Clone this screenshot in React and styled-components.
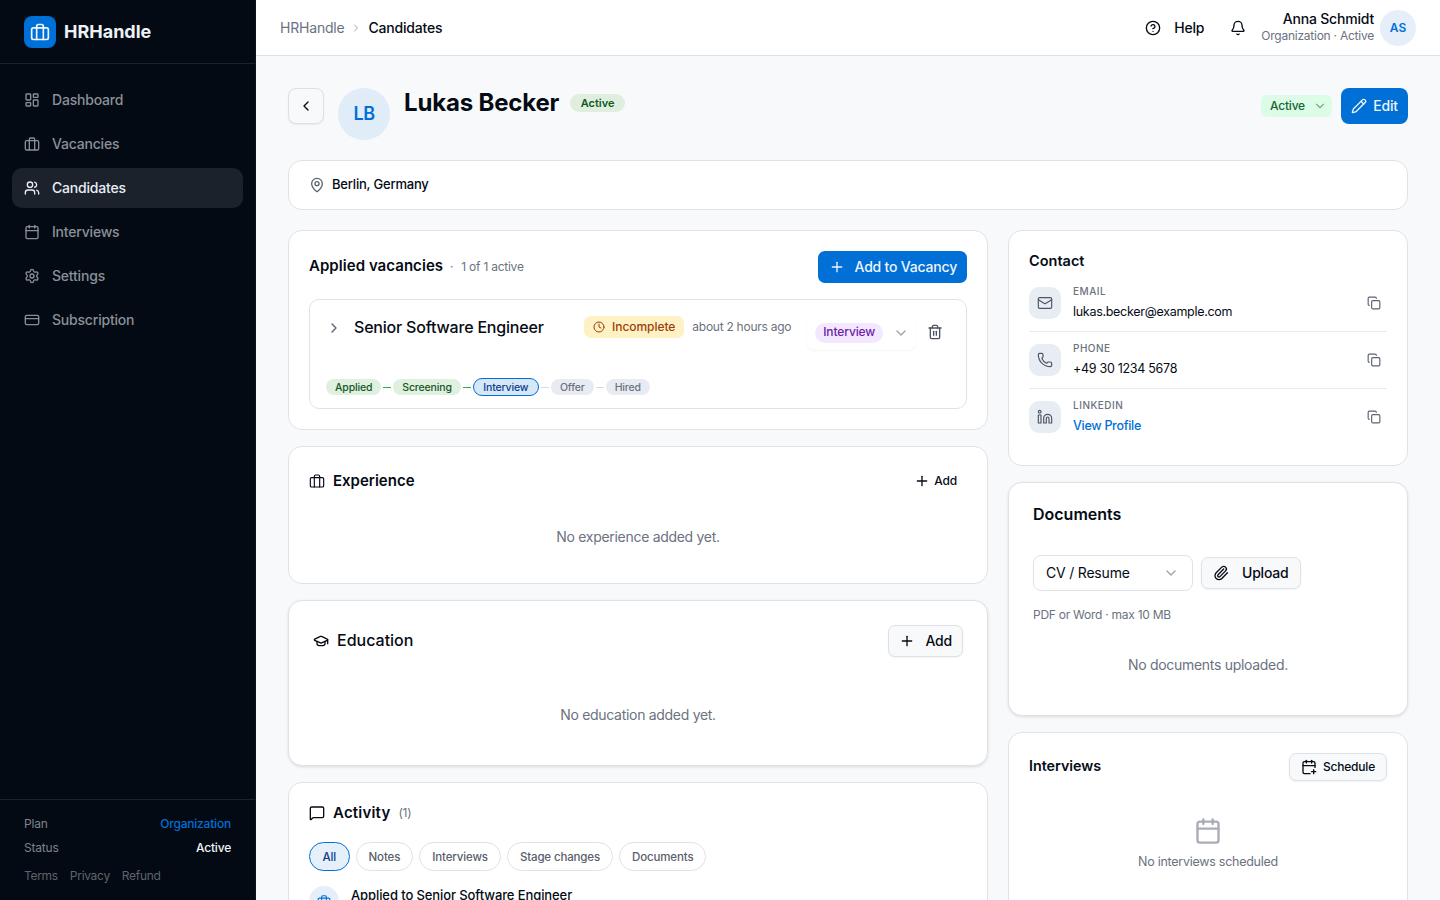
import React from "react";
import styled, { createGlobalStyle } from "styled-components";
import {
  LayoutDashboard, Users, Calendar, Settings, CreditCard, CircleHelp, Bell, ChevronRight, ChevronLeft,
  ChevronDown, Pencil, MapPin, Plus, Clock, Trash2, GraduationCap, MessageSquare, Mail, Phone, Linkedin,
  Copy, Paperclip, CalendarPlus,
} from "lucide-react";

const Global = createGlobalStyle`
  html, body { margin: 0; height: 100%; overflow: hidden; }
  body {
    font-family: Inter, "Liberation Sans", sans-serif; background: #f8f9fb; color: #050b14;
    line-height: 20px; letter-spacing: -0.2px;
  }
  * { box-sizing: border-box; }
  button { font-family: inherit; letter-spacing: inherit; line-height: inherit; }
`;

const Case = ({ size = 16, strokeWidth = 2, color = "currentColor" }) => (
  <svg width={size} height={size} viewBox="0 0 24 24" fill="none" stroke={color} strokeWidth={strokeWidth} strokeLinecap="round" strokeLinejoin="round">
    <rect x="2" y="7" width="20" height="14" rx="2" />
    <path d="M16 21V5a2 2 0 0 0-2-2h-4a2 2 0 0 0-2 2v16" />
  </svg>
);

const Shell = styled.div`display: flex; height: 900px; width: 1440px; overflow: hidden;`;
const Sidebar = styled.aside`
  width: 256px; flex: none; background: #030a13; border-right: 1px solid #0d141d;
  display: flex; flex-direction: column; height: 100%;
`;
const Brand = styled.div`
  height: 64px; display: flex; align-items: center; gap: 8px; padding: 0 24px;
  border-bottom: 1px solid #1b222c;
`;
const LogoMark = styled.div`
  width: 32px; height: 32px; border-radius: 8px; background: #0070d9; color: #f1f5f9;
  display: flex; align-items: center; justify-content: center;
`;
const BrandName = styled.span`font-size: 18px; font-weight: 700; color: #edf1f6; letter-spacing: 0;`;
const Nav = styled.nav`display: flex; flex-direction: column; gap: 4px; padding: 16px 12px; flex: 1;`;
const NavItem = styled.a`
  height: 40px; display: flex; align-items: center; gap: 12px; padding: 0 12px; border-radius: 10px;
  font-size: 14px; font-weight: 500; color: ${p => (p.$active ? "#e9edf3" : "#8b9098")};
  background: ${p => (p.$active ? "#1b222c" : "transparent")};
  svg { flex: none; }
`;
const SideFoot = styled.div`
  border-top: 1px solid #1b222c; padding: 16px 24px 0; height: 101px;
  display: flex; flex-direction: column; font-size: 12px; color: #7f848c;
`;
const FootRow = styled.div`display: flex; justify-content: space-between; height: 24px; line-height: 16px;`;
const FootVal = styled.span`color: ${p => p.$c}; font-weight: 500;`;
const FootLinks = styled.div`display: flex; gap: 12px; color: #5f646c; margin-top: 4px; line-height: 16px; letter-spacing: -0.3px;`;

const Main = styled.div`flex: 1; min-width: 0; display: flex; flex-direction: column; height: 100%;`;
const Top = styled.header`
  height: 56px; flex: none; background: #fff; border-bottom: 1px solid #dfe1e5;
  display: flex; align-items: center; justify-content: space-between; padding: 0 24px;
`;
const Crumbs = styled.div`display: flex; align-items: center; gap: 6px; font-size: 14px; color: #6b7280; svg { color: #9ca3af; }`;
const CrumbNow = styled.span`color: #050b14; font-weight: 500;`;
const TopRight = styled.div`display: flex; align-items: center;`;
const HelpBtn = styled.div`display: flex; align-items: center; gap: 13px; font-size: 14px; font-weight: 500; margin-right: 26px;`;
const BellWrap = styled.div`display: flex; margin-right: 15px;`;
const UserText = styled.div`display: flex; flex-direction: column; align-items: flex-end; margin-right: 6px; padding-bottom: 2px;`;
const UserName = styled.span`font-size: 14px; font-weight: 500; line-height: 18px;`;
const UserSub = styled.span`font-size: 12px; color: #6b7280; line-height: 16px; letter-spacing: -0.24px;`;
const UserAvatar = styled.div`
  width: 36px; height: 36px; border-radius: 50%; background: #e6eff9; color: #0070d9;
  display: flex; align-items: center; justify-content: center; font-size: 12px; font-weight: 600; letter-spacing: 0;
`;

const Content = styled.main`flex: 1; overflow: hidden; padding: 32px;`;
const Head = styled.div`display: flex; align-items: flex-start; height: 52px; margin-bottom: 20px;`;
const BackBtn = styled.button`
  width: 36px; height: 36px; border: 1px solid #dde0e6; border-radius: 8px; background: #f8f9fb; padding: 0;
  display: flex; align-items: center; justify-content: center; color: #050b14; margin-right: 14px;
  box-shadow: 0 1px 2px rgba(0,0,0,.06);
`;
const BigAvatar = styled.div`
  width: 52px; height: 52px; border-radius: 50%; background: #e0ecf7; color: #0070d9; line-height: 26px;
  display: flex; align-items: center; justify-content: center; font-size: 18px; font-weight: 600; margin-right: 14px;
  letter-spacing: -0.5px;
`;
const Name = styled.h1`margin: 0; font-size: 24px; line-height: 30px; font-weight: 700; letter-spacing: -0.17px;`;
const NameBadge = styled.span`
  margin: 6px 0 0 11px; height: 18px; padding: 0 10.5px; border-radius: 9px; background: #dfeedf; color: #0d5a1a;
  font-size: 11px; font-weight: 600; display: flex; align-items: center; letter-spacing: 0;
`;
const HeadActions = styled.div`margin-left: auto; display: flex; align-items: center; gap: 9px;`;
const StatusSel = styled.div`
  height: 22px; width: 71px; padding: 0 5px 0 9px; border-radius: 6px; background: #dcfce7; color: #166534;
  font-size: 12px; font-weight: 500; display: flex; align-items: center; justify-content: space-between;
  svg { color: #7fa98c; }
`;
const EditBtn = styled.button`
  height: 36px; width: 67px; border: 0; border-radius: 8px; background: #0070d6; color: #eef4fb;
  font-size: 14px; font-weight: 500; display: flex; align-items: center; justify-content: center; gap: 6px; padding: 0;
`;

const Card = styled.section`
  background: #fff; border: 1px solid #dfe2e8; border-radius: 14px;
  height: ${p => p.$h}px; padding: ${p => p.$pad || 20}px;
  box-shadow: ${p => (p.$shadow ? "0 1px 3px rgba(0,0,0,.12)" : "none")};
  overflow: hidden;
`;
const LocCard = styled(Card)`
  display: flex; align-items: center; gap: 7px; padding: 0 20px; font-size: 13px; font-weight: 500;
  margin-bottom: 20px; svg { color: #5c6470; }
`;
const LocText = styled.span`padding-bottom: 2px;`;
const Columns = styled.div`display: grid; grid-template-columns: 700px 400px; gap: 20px;`;
const Col = styled.div`display: flex; flex-direction: column; gap: 16px;`;

const RowBetween = styled.div`display: flex; align-items: center; justify-content: space-between; min-height: ${p => p.$min || 0}px;`;
const TitleLine = styled.div`display: flex; align-items: center;`;
const H3 = styled.h3`
  margin: 0 0 ${p => p.$mb || 0}px; font-size: ${p => p.$fs || 15}px; font-weight: ${p => p.$w || 600};
  line-height: ${p => p.$lh || 20}px; letter-spacing: ${p => p.$ls ?? 0}px;
`;
const Sub = styled.span`font-size: 12px; color: #6b7280; margin-left: ${p => p.$ml ?? 7}px; letter-spacing: -0.24px;`;
const PrimaryBtn = styled.button`
  height: 32px; width: 149px; border: 0; border-radius: 7px; background: #0070d6; color: #eef4fb; padding: 0 10px 0 11px;
  font-size: 14px; font-weight: 500; display: flex; align-items: center; justify-content: space-between;
`;
const AppBox = styled.div`
  margin-top: 16px; height: 110px; border: 1px solid #dfe2e8; border-radius: 10px; padding: 0 16px;
  display: flex; flex-direction: column;
`;
const AppTop = styled.div`display: flex; align-items: flex-start; height: 78px;`;
const AppChevron = styled.div`display: flex; margin: 20px 12px 0 0; color: #5c6470;`;
const JobTitle = styled.span`font-size: 16px; font-weight: 500; margin-top: 16px; width: 230px; line-height: 22px; flex: none;`;
const WarnBadge = styled.span`
  margin-top: 16px; height: 22px; padding: 0 9px; border-radius: 7px; background: #fef2c4; color: #9a3f0a; flex: none;
  font-size: 12px; font-weight: 500; display: flex; align-items: center; gap: 7px; letter-spacing: -0.05px; svg { flex: none; }
`;
const Ago = styled.span`font-size: 12px; color: #6b7280; margin: 19px 0 0 8px; line-height: 16px; white-space: nowrap; letter-spacing: -0.26px; flex: none;`;
const StageSel = styled.div`
  margin: 15px 0 0 16px; width: 109px; height: 35px; border-radius: 8px; padding: 0 7px 0 8px; flex: none;
  box-shadow: 0 1px 2px rgba(0,0,0,.05); display: flex; align-items: center; justify-content: space-between;
  svg { color: #9ca3af; }
`;
const StagePill = styled.span`
  height: 20px; padding: 0 8px 1px; border-radius: 10px; background: #f3e8ff; color: #6b21a8; font-size: 12px; font-weight: 500;
  display: flex; align-items: center; letter-spacing: -0.12px;
`;
const TrashWrap = styled.div`display: flex; color: #4b5563; margin: 24px 0 0 11px;`;
const Steps = styled.div`display: flex; align-items: center; height: 18px;`;
const Step = styled.span`
  height: ${p => (p.$cur ? 18 : 16)}px; padding: 1px ${p => (p.$cur ? 9.5 : 9)}px 0; border-radius: 9px; font-size: 10.5px; font-weight: 500;
  display: flex; align-items: center; letter-spacing: -0.15px;
  background: ${p => (p.$cur ? "#d6e7f7" : p.$done ? "#e0f0e0" : "#e8ecf2")};
  color: ${p => (p.$cur ? "#0b3d8c" : p.$done ? "#14571f" : "#6b7280")};
  border: ${p => (p.$cur ? "1px solid #0070d6" : "0")};
`;
const Link = styled.span`width: 8px; height: 1px; margin: 0 2px; background: ${p => (p.$done ? "#22b14c" : "#d5dae2")};`;

const IconTitle = styled.div`display: flex; align-items: center; gap: ${p => p.$gap || 8}px;`;
const GhostAdd = styled.div`display: flex; align-items: center; gap: 4px; font-size: 12px; font-weight: 500; padding-right: 10px;`;
const Empty = styled.p`margin: 0; text-align: center; font-size: 14px; color: #6b7280; line-height: 20px; margin-top: ${p => p.$mt}px; letter-spacing: -0.3px;`;
const OutlineBtn = styled.button`
  height: ${p => p.$h}px; padding: 0 ${p => p.$px}px; border: 1px solid #dde0e6; border-radius: 7px; background: #f8f9fb;
  color: #050b14; font-size: ${p => p.$fs}px; font-weight: 500; display: flex; align-items: center; gap: ${p => p.$gap}px;
  box-shadow: 0 1px 2px rgba(0,0,0,.05);
`;
const Filters = styled.div`display: flex; gap: 6px; margin-top: 19px;`;
const Filter = styled.span`
  height: 29px; padding: 0 ${p => (p.$on ? 12.5 : 12)}px; border-radius: 15px; font-size: 11.5px; font-weight: 500; display: flex; align-items: center;
  letter-spacing: -0.14px;
  border: 1px solid ${p => (p.$on ? "#0070d6" : "#dfe2e8")};
  background: ${p => (p.$on ? "#e6f0fa" : "#fff")};
  color: ${p => (p.$on ? "#0b3d8c" : "#59606c")};
`;
const ActivityRow = styled.div`display: flex; gap: 12px; margin-top: 15px;`;
const ActDot = styled.div`
  width: 30px; height: 30px; border-radius: 50%; background: #e6eff9; color: #0070d9; flex: none;
  display: flex; align-items: center; justify-content: center;
`;
const ActText = styled.span`font-size: 13px; font-weight: 500; line-height: 16px; padding-top: 1px; letter-spacing: -0.1px;`;

const ContactRow = styled.div`
  display: flex; align-items: center; height: 57px; border-bottom: 1px solid ${p => (p.$last ? "transparent" : "#e8eaee")};
`;
const ContactList = styled.div`margin-top: 4px;`;
const IconTile = styled.div`
  width: 32px; height: 32px; border-radius: 10px; background: #e8ecf3; color: #4b5563; flex: none;
  display: flex; align-items: center; justify-content: center; margin-right: 12px;
`;
const ContactText = styled.div`flex: 1; display: flex; flex-direction: column; gap: 5px; padding-bottom: 3px;`;
const ContactLabel = styled.span`font-size: 10px; font-weight: 500; letter-spacing: .5px; color: #6b7280; line-height: 16px;`;
const ContactVal = styled.span`
  font-size: 12.5px; line-height: 16px; letter-spacing: -0.29px;
  color: ${p => p.$c || "#050b14"}; font-weight: ${p => (p.$c ? 500 : 400)};
`;
const CopyWrap = styled.div`display: flex; color: #5c6470; margin-right: 6px;`;
const DocControls = styled.div`display: flex; align-items: center; gap: 8px; margin-top: 34px;`;
const TypeSelect = styled.div`
  width: 160px; height: 36px; border: 1px solid #dfe2e8; border-radius: 8px; padding: 0 13px 0 12px;
  display: flex; align-items: center; justify-content: space-between; font-size: 14px; svg { color: #9ca3af; }
`;
const Hint = styled.p`margin: 16px 0 0; font-size: 12px; line-height: 16px; color: #6b7280; letter-spacing: -0.26px;`;
const EmptyIcon = styled.div`display: flex; justify-content: center; margin-top: 36px; color: #a8adb5;`;
const EmptySmall = styled.p`margin: 9px 0 0; text-align: center; font-size: 12.5px; line-height: 16px; color: #6b7280; letter-spacing: -0.26px;`;

const nav = [
  [LayoutDashboard, "Dashboard"], [Case, "Vacancies"], [Users, "Candidates", true],
  [Calendar, "Interviews"], [Settings, "Settings"], [CreditCard, "Subscription"],
];
const contacts = [
  [Mail, "EMAIL", "lukas.becker@example.com"],
  [Phone, "PHONE", "+49 30 1234 5678"],
  [Linkedin, "LINKEDIN", "View Profile", "#0070d6"],
];

export default function App() {
  return (
    <Shell>
      <Global />
      <Sidebar>
        <Brand>
          <LogoMark><Case size={20} strokeWidth={2} /></LogoMark>
          <BrandName>HRHandle</BrandName>
        </Brand>
        <Nav>
          {nav.map(([I, label, active]) => (
            <NavItem key={label} $active={active}><I size={16} strokeWidth={2} />{label}</NavItem>
          ))}
        </Nav>
        <SideFoot>
          <FootRow><span>Plan</span><FootVal $c="#0070d6">Organization</FootVal></FootRow>
          <FootRow><span>Status</span><FootVal $c="#f1f5f9">Active</FootVal></FootRow>
          <FootLinks><span>Terms</span><span>Privacy</span><span>Refund</span></FootLinks>
        </SideFoot>
      </Sidebar>
      <Main>
        <Top>
          <Crumbs><span>HRHandle</span><ChevronRight size={12} /><CrumbNow>Candidates</CrumbNow></Crumbs>
          <TopRight>
            <HelpBtn><CircleHelp size={16} />Help</HelpBtn>
            <BellWrap><Bell size={16} /></BellWrap>
            <UserText><UserName>Anna Schmidt</UserName><UserSub>Organization · Active</UserSub></UserText>
            <UserAvatar>AS</UserAvatar>
          </TopRight>
        </Top>
        <Content>
          <Head>
            <BackBtn><ChevronLeft size={16} /></BackBtn>
            <BigAvatar>LB</BigAvatar>
            <Name>Lukas Becker</Name>
            <NameBadge>Active</NameBadge>
            <HeadActions>
              <StatusSel>Active<ChevronDown size={14} /></StatusSel>
              <EditBtn><Pencil size={16} />Edit</EditBtn>
            </HeadActions>
          </Head>
          <LocCard $h={50}><MapPin size={16} /><LocText>Berlin, Germany</LocText></LocCard>
          <Columns>
            <Col>
              <Card $h={200}>
                <RowBetween>
                  <TitleLine>
                    <H3 $mb={2} $ls={0.05}>Applied vacancies</H3>
                    <Sub>·</Sub><Sub $ml={8}>1 of 1 active</Sub>
                  </TitleLine>
                  <PrimaryBtn><Plus size={16} />Add to Vacancy</PrimaryBtn>
                </RowBetween>
                <AppBox>
                  <AppTop>
                    <AppChevron><ChevronRight size={16} /></AppChevron>
                    <JobTitle>Senior Software Engineer</JobTitle>
                    <WarnBadge><Clock size={12} />Incomplete</WarnBadge>
                    <Ago>about 2 hours ago</Ago>
                    <StageSel><StagePill>Interview</StagePill><ChevronDown size={16} /></StageSel>
                    <TrashWrap><Trash2 size={16} /></TrashWrap>
                  </AppTop>
                  <Steps>
                    <Step $done>Applied</Step><Link $done />
                    <Step $done>Screening</Step><Link $done />
                    <Step $cur>Interview</Step><Link />
                    <Step>Offer</Step><Link />
                    <Step>Hired</Step>
                  </Steps>
                </AppBox>
              </Card>
              <Card $h={138}>
                <RowBetween $min={27}>
                  <IconTitle><Case size={16} strokeWidth={1.75} /><H3>Experience</H3></IconTitle>
                  <GhostAdd><Plus size={16} />Add</GhostAdd>
                </RowBetween>
                <Empty $mt={33}>No experience added yet.</Empty>
              </Card>
              <Card $h={166} $pad={24} $shadow>
                <RowBetween>
                  <IconTitle $gap={8}><GraduationCap size={16} /><H3 $fs={16} $w={500} $mb={2}>Education</H3></IconTitle>
                  <OutlineBtn $h={32} $px={10} $fs={14} $gap={10}><Plus size={16} />Add</OutlineBtn>
                </RowBetween>
                <Empty $mt={48}>No education added yet.</Empty>
              </Card>
              <Card $h={200}>
                <IconTitle>
                  <MessageSquare size={16} /><H3 $ls={0.2}>Activity</H3><Sub $ml={0}>(1)</Sub>
                </IconTitle>
                <Filters>
                  <Filter $on>All</Filter><Filter>Notes</Filter><Filter>Interviews</Filter>
                  <Filter>Stage changes</Filter><Filter>Documents</Filter>
                </Filters>
                <ActivityRow>
                  <ActDot><Case size={14} /></ActDot>
                  <ActText>Applied to Senior Software Engineer</ActText>
                </ActivityRow>
              </Card>
            </Col>
            <Col>
              <Card $h={236}>
                <H3 $fs={14.5}>Contact</H3>
                <ContactList>
                  {contacts.map(([I, label, val, c], i) => (
                    <ContactRow key={label} $last={i === 2}>
                      <IconTile><I size={16} strokeWidth={1.75} /></IconTile>
                      <ContactText>
                        <ContactLabel>{label}</ContactLabel>
                        <ContactVal $c={c}>{val}</ContactVal>
                      </ContactText>
                      <CopyWrap><Copy size={14} /></CopyWrap>
                    </ContactRow>
                  ))}
                </ContactList>
              </Card>
              <Card $h={234} $pad={24} $shadow>
                <H3 $fs={16} $lh={14}>Documents</H3>
                <DocControls>
                  <TypeSelect>CV / Resume<ChevronDown size={16} /></TypeSelect>
                  <OutlineBtn $h={32} $px={11} $fs={14} $gap={13}><Paperclip size={16} />Upload</OutlineBtn>
                </DocControls>
                <Hint>PDF or Word · max 10 MB</Hint>
                <Empty $mt={32}>No documents uploaded.</Empty>
              </Card>
              <Card $h={200}>
                <RowBetween>
                  <H3 $fs={14.3} $mb={2}>Interviews</H3>
                  <OutlineBtn $h={28} $px={11} $fs={12} $gap={6}><CalendarPlus size={16} />Schedule</OutlineBtn>
                </RowBetween>
                <EmptyIcon><Calendar size={28} /></EmptyIcon>
                <EmptySmall>No interviews scheduled</EmptySmall>
              </Card>
            </Col>
          </Columns>
        </Content>
      </Main>
    </Shell>
  );
}
